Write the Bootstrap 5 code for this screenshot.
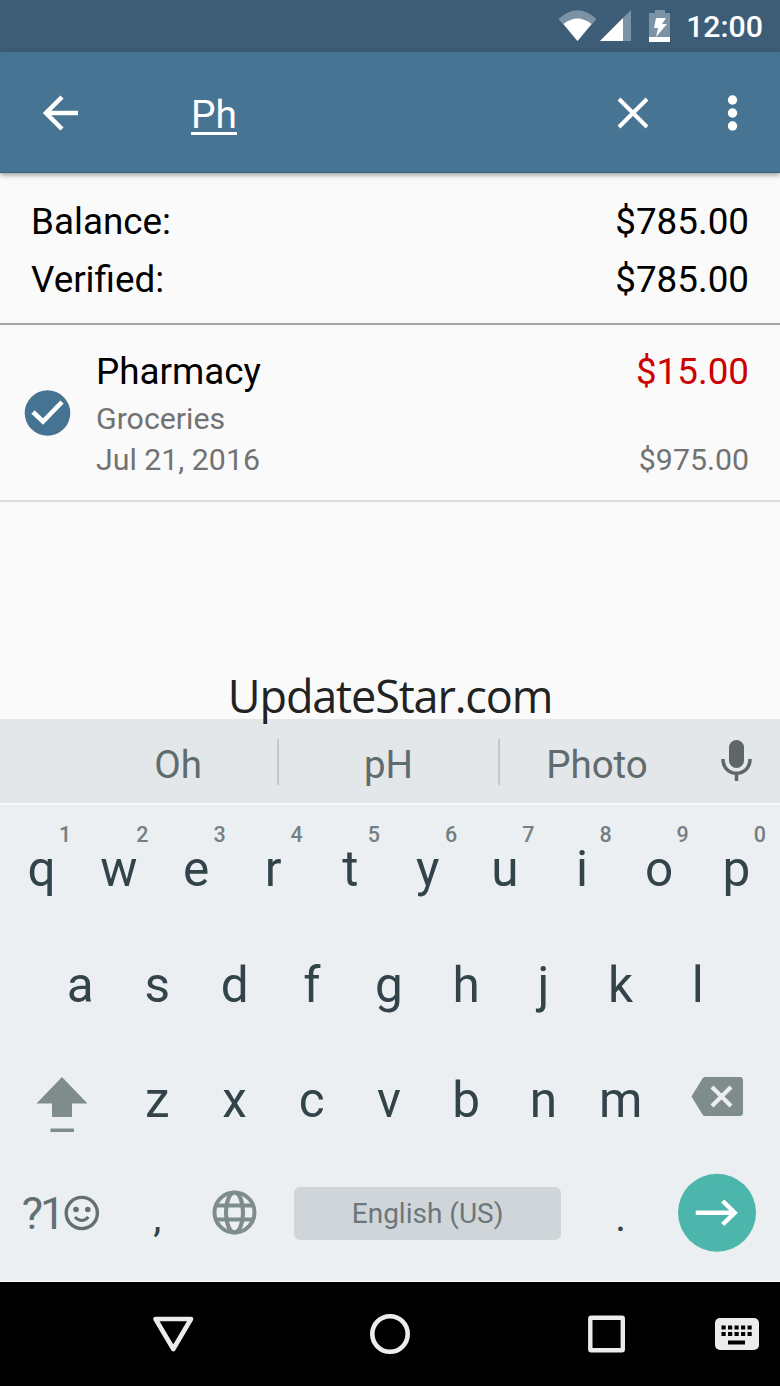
<!DOCTYPE html>
<html lang="en">
<head>
<meta charset="utf-8">
<meta name="viewport" content="width=device-width, initial-scale=1">
<title>Ledger search</title>
<link href="https://cdn.jsdelivr.net/npm/bootstrap@5.3.0/dist/css/bootstrap.min.css" rel="stylesheet">
<style>
  body { font-family: Roboto, sans-serif; background: #fafafa; color: #000; overflow: hidden; }
  .screen { width: 780px; height: 1386px; }
  svg { display: block; flex: none; }

  .status-bar { height: 52px; background: #3d5d77; padding-right: 17px; }
  .clock { font-size: 30.3px; font-weight: 500; line-height: 54px; margin-left: 15px; }
  .app-bar { height: 121px; background: #477492; box-shadow: 0 2px 5px rgba(0,0,0,.38); padding: 2px 31px 0 43px; border-bottom: 1px solid #356580; z-index: 2; }
  .query { font-size: 38.9px; line-height: 44px; margin-left: 112px; margin-top: 3px; }
  .query span { display: inline-block; height: 42px; border-bottom: 3px solid #fff; }

  .totals { height: 152px; padding: 20px 31px 0; border-bottom: 2px solid #a3a3a3; font-size: 36.8px; line-height: 57.5px; }
  .entry { height: 177px; padding: 18px 31px 0 24px; border-bottom: 2px solid #dcdcdc; }
  .entry-check { margin: 47px 25px 0 0; }
  .entry-title { font-size: 36.8px; line-height: 58px; height: 55px; }
  .entry-sub { font-size: 30.3px; line-height: 41px; color: #727272; }
  .debit { color: #cc0000; }
  .brand { font-family: "Open Sans", sans-serif; font-size: 45px; line-height: 62px; color: #222; z-index: 2; height: 54px; letter-spacing: -1.15px; }

  .keyboard { height: 563px; background: #eceff1; border-bottom: 1px solid #fff; color: #32434a; }
  .suggestions { height: 86px; background: #e4e7e9; border-bottom: 2px solid #f5f7f8; color: #5f6b6e; font-size: 38.5px; padding-left: 79px; }
  .suggestion { line-height: 91px; }
  .divider { width: 2px; height: 46px; background: #c3c8ca; margin-top: 20px; }
  .key-row { height: 115.5px; }
  .key-rows { padding: 5px 5px 0 3px; }
  .key { flex: 1 1 0; min-width: 0; font-size: 49.5px; line-height: 118px; text-align: center; }
  .key-wide { flex-grow: 1.5; }
  .key-space { flex-grow: 4; }
  .key-mark { font-size: 41px; line-height: 121px; }
  .half-gap { flex: .5 1 0; }
  .hint { position: absolute; top: 12px; left: 50%; width: 47px; font-size: 21.5px; font-weight: 500; line-height: 25px; color: #757f82; }
  .space-bar { width: 267px; height: 53px; border-radius: 6px; background: #cfd5d8; color: #6d777a; font-size: 28px; line-height: 54px; margin-bottom: 1px; }
  .symbols { font-size: 45px; letter-spacing: -3.2px; color: #646f71; line-height: 113px; }

  .nav-keys { height: 104px; background: #000; }
</style>
</head>
<body>
<main class="screen d-flex flex-column">
  <header class="status-bar d-flex align-items-start justify-content-end text-white">
    <svg width="42" height="52" viewBox="556 0 42 52"><path fill="#7c92a5" d="M558.500 19Q577.500 1.500 596.500 19L577.500 41Z"/><path fill="#fff" d="M563.500 24Q577.500 13 591.500 24L577.500 41Z"/></svg>
    <svg width="51" height="52" viewBox="598 0 51 52"><path fill="#7c92a5" d="M600 41L631 10V41Z"/><path fill="#fff" d="M600 41L623 18V41Z"/></svg>
    <svg width="22" height="52" viewBox="649 0 22 52"><path fill="#7c92a5" d="M649 13H655V10H665V13H670V37H649Z"/><path fill="#fff" d="M649 37H670V42H649ZM656 18H666L662 24H667L656 37L658 28H654Z"/></svg>
    <span class="clock">12:00</span>
  </header>

  <nav class="app-bar position-relative d-flex align-items-center text-white">
    <svg width="36" height="36" viewBox="0 0 36 36" fill="none" stroke="#fff" stroke-width="4.500"><path d="M35 18H4M19 2L3 18L19 34"/></svg>
    <div class="query flex-grow-1"><span>Ph</span></div>
    <svg width="32" height="32" viewBox="0 0 32 32" fill="none" stroke="#fff" stroke-width="4"><path d="M2 2L30 30M30 2L2 30"/></svg>
    <svg width="100" height="40" viewBox="0 0 100 40" fill="#fff"><circle cx="83.500" cy="7" r="4.700"/><circle cx="83.500" cy="20" r="4.700"/><circle cx="83.500" cy="33" r="4.700"/></svg>
  </nav>

  <section class="totals">
    <div class="d-flex justify-content-between"><span>Balance:</span><span>$785.00</span></div>
    <div class="d-flex justify-content-between"><span>Verified:</span><span>$785.00</span></div>
  </section>

  <section class="entry d-flex align-items-start">
    <svg class="entry-check" width="47" height="47" viewBox="0 0 47 47"><circle cx="23.500" cy="23" r="22.800" fill="#457493"/><path d="M9 22L19 31.500L38 12" fill="none" stroke="#fff" stroke-width="4.600"/></svg>
    <div class="flex-grow-1">
      <div class="entry-title d-flex justify-content-between"><span>Pharmacy</span><span class="debit">$15.00</span></div>
      <div class="entry-sub">Groceries</div>
      <div class="entry-sub d-flex justify-content-between"><span>Jul 21, 2016</span><span>$975.00</span></div>
    </div>
  </section>

  <section class="flex-grow-1 d-flex align-items-end justify-content-center">
    <div class="brand position-relative">UpdateStar.com</div>
  </section>

  <section class="keyboard">
    <div class="suggestions d-flex text-center">
      <div class="suggestion" style="width:198px">Oh</div><div class="divider"></div>
      <div class="suggestion" style="width:219px">pH</div><div class="divider"></div>
      <div class="suggestion" style="width:194px">Photo</div>
      <svg width="85" height="84" viewBox="694 719 85 84"><rect x="729" y="740" width="15" height="28" rx="7.500" fill="#5f6668"/><path d="M723 759C723 778 750 778 750 759M736.500 773V781" fill="none" stroke="#5f6668" stroke-width="3.500"/></svg>
    </div>
    <div class="key-rows">
      <div class="key-row d-flex">
        <div class="key position-relative">q<span class="hint">1</span></div>
        <div class="key position-relative">w<span class="hint">2</span></div>
        <div class="key position-relative">e<span class="hint">3</span></div>
        <div class="key position-relative">r<span class="hint">4</span></div>
        <div class="key position-relative">t<span class="hint">5</span></div>
        <div class="key position-relative">y<span class="hint">6</span></div>
        <div class="key position-relative">u<span class="hint">7</span></div>
        <div class="key position-relative">i<span class="hint">8</span></div>
        <div class="key position-relative">o<span class="hint">9</span></div>
        <div class="key position-relative">p<span class="hint">0</span></div>
      </div>
      <div class="key-row d-flex">
        <div class="half-gap"></div>
        <div class="key">a</div><div class="key">s</div><div class="key">d</div><div class="key">f</div><div class="key">g</div><div class="key">h</div><div class="key">j</div><div class="key">k</div><div class="key">l</div>
        <div class="half-gap"></div>
      </div>
      <div class="key-row d-flex">
        <div class="key key-wide d-flex justify-content-center">
          <svg width="52" height="115" viewBox="35 1041 52 115" fill="#7f8c8e"><path d="M62 1077L87.500 1103.500H72V1117H52V1103.500H36.500ZM50.500 1128.500H74V1132H50.500Z"/></svg>
        </div>
        <div class="key">z</div><div class="key">x</div><div class="key">c</div><div class="key">v</div><div class="key">b</div><div class="key">n</div><div class="key">m</div>
        <div class="key key-wide d-flex justify-content-center">
          <svg width="52" height="115" viewBox="691 1041 52 115"><path fill="#7f8c8e" d="M705 1077H740Q743 1077 743 1080.500V1112.500Q743 1116 740 1116H705Q703.500 1116 702.500 1114.500L691.500 1096.500L702.500 1078.500Q703.500 1077 705 1077Z"/><path d="M712 1087L731 1106M731 1087L712 1106" stroke="#eceff1" stroke-width="4.200"/></svg>
        </div>
      </div>
      <div class="key-row d-flex">
        <div class="key key-wide d-flex justify-content-center">
          <span class="symbols">?1</span>
          <svg width="38" height="115" viewBox="62.500 1157 38 115" fill="none" stroke="#646f71"><circle cx="82.300" cy="1213" r="15.600" stroke-width="3.400"/><path d="M75.500 1217Q82.300 1224 89 1217" stroke-width="3"/><g fill="#646f71" stroke="none"><circle cx="76.500" cy="1209.500" r="2.800"/><circle cx="88.300" cy="1209.500" r="2.800"/></g></svg>
        </div>
        <div class="key key-mark">,</div>
        <div class="key d-flex justify-content-center">
          <svg width="46" height="115" viewBox="211.500 1157 46 115" fill="none" stroke="#7f8c8e" stroke-width="4"><circle cx="234" cy="1212.500" r="20"/><ellipse cx="234" cy="1212.500" rx="8.500" ry="20"/><path d="M216 1205.500H252M216 1219.500H252"/></svg>
        </div>
        <div class="key key-space d-flex justify-content-center align-items-center"><div class="space-bar">English (US)</div></div>
        <div class="key key-mark">.</div>
        <div class="key key-wide d-flex justify-content-center">
          <svg width="78" height="115" viewBox="678.300 1157 78 115"><circle cx="717.300" cy="1212.700" r="39" fill="#4db6ac"/><path d="M696 1212.700H735M723 1201L735 1212.700L723 1224.500" fill="none" stroke="#fff" stroke-width="4.500"/></svg>
        </div>
      </div>
    </div>
  </section>

  <footer class="nav-keys d-flex">
    <svg width="347" height="104" viewBox="0 1282 347 104" fill="none" stroke="#ececec" stroke-width="4.600" stroke-linejoin="round"><path d="M155.500 1319H191L173.300 1349Z"/></svg>
    <svg width="86" height="104" viewBox="347 1282 86 104"><circle cx="390" cy="1334" r="17.700" fill="none" stroke="#ececec" stroke-width="4.600"/></svg>
    <svg width="217" height="104" viewBox="433 1282 217 104"><rect x="590.300" y="1317.800" width="32.500" height="32.500" rx="1" fill="none" stroke="#ececec" stroke-width="4.400" stroke-linejoin="round"/></svg>
    <svg width="130" height="104" viewBox="650 1282 130 104"><rect x="715" y="1318" width="44" height="32" rx="5" fill="#ececec"/><path d="M721.500 1327.500H753M721.500 1334H753" stroke="#000" stroke-width="4.200" stroke-dasharray="4.200 2.300"/><path d="M728 1342.500H745" stroke="#000" stroke-width="4"/></svg>
  </footer>
</main>
<script src="https://cdn.jsdelivr.net/npm/bootstrap@5.3.0/dist/js/bootstrap.bundle.min.js"></script>
</body>
</html>
